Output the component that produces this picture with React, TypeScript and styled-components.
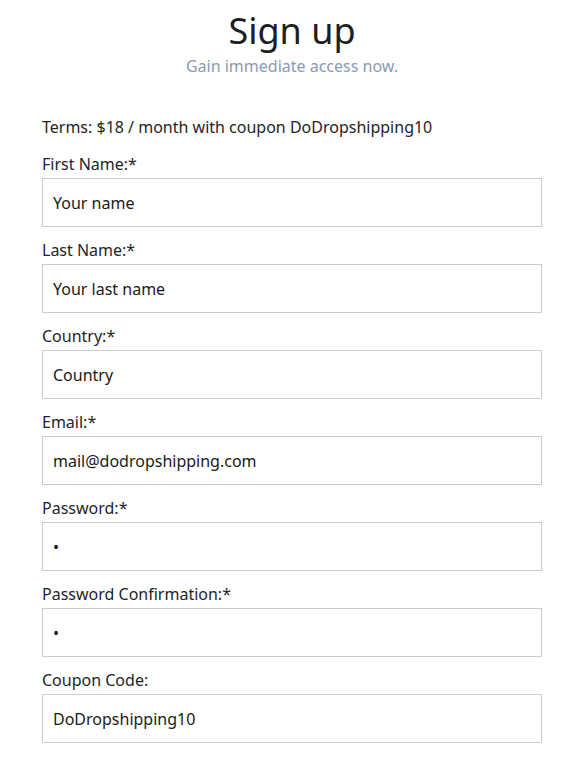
import React from "react";
import styled, { createGlobalStyle } from "styled-components";

const GlobalStyle = createGlobalStyle`
  html, body {
    margin: 0;
    padding: 0;
    background: #ffffff;
  }
  body {
    font-family: "Noto Sans", "Open Sans", sans-serif;
    color: #1f2428;
  }
`;

const fields = [
  { label: "First Name:*", value: "Your name" },
  { label: "Last Name:*", value: "Your last name" },
  { label: "Country:*", value: "Country" },
  { label: "Email:*", value: "mail@dodropshipping.com" },
  { label: "Password:*", value: "•" },
  { label: "Password Confirmation:*", value: "•" },
  { label: "Coupon Code:", value: "DoDropshipping10" },
];

export default function App() {
  return (
    <>
      <GlobalStyle />
      <Page>
        <Header>
          <Title>Sign up</Title>
          <Subtitle>Gain immediate access now.</Subtitle>
        </Header>
        <Form>
          <Terms>Terms: $18 / month with coupon DoDropshipping10</Terms>
          {fields.map((f) => (
            <Field key={f.label}>
              <Label>{f.label}</Label>
              <Input type="text" defaultValue={f.value} readOnly />
            </Field>
          ))}
        </Form>
      </Page>
    </>
  );
}

const Page = styled.div`
  width: 500px;
  margin: 0 auto;
  padding: 7px 0 0 11px;
  display: flex;
  flex-direction: column;
`;

const Header = styled.div`
  display: flex;
  flex-direction: column;
  align-items: center;
`;

const Title = styled.h1`
  margin: 0;
  font-size: 36px;
  font-weight: 400;
  line-height: 48px;
  color: #1b1e23;
`;

const Subtitle = styled.p`
  margin: 0;
  font-size: 16px;
  line-height: 22px;
  color: #8b9bb0;
`;

const Form = styled.div`
  margin-top: 39px;
  display: flex;
  flex-direction: column;
  gap: 13px;
`;

const Terms = styled.div`
  font-size: 16px;
  line-height: 22px;
  margin-bottom: 3px;
  color: #1f2428;
`;

const Field = styled.div`
  display: flex;
  flex-direction: column;
  gap: 4px;
`;

const Label = styled.label`
  font-size: 16px;
  line-height: 20px;
  color: #1f2428;
`;

const Input = styled.input`
  box-sizing: border-box;
  width: 100%;
  height: 49px;
  padding: 0 10px;
  border: 1px solid #cccccc;
  border-radius: 0;
  outline: none;
  font-family: inherit;
  font-size: 16px;
  color: #1a1a1a;
  background: #ffffff;
`;
